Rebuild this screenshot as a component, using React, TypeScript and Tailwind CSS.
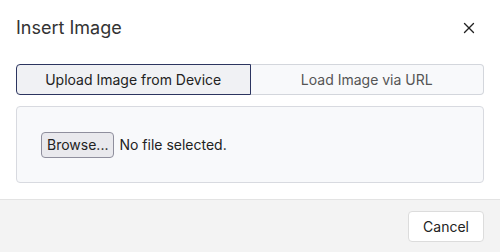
import { X } from 'lucide-react';

export default function App() {
  return (
    <div className="flex h-[252px] w-[500px] flex-col overflow-hidden bg-white font-['Inter',sans-serif] text-[#222]">
      <div className="flex items-center justify-between px-4 pb-[24px] pt-[16px]">
        <h2 className="text-[18px] leading-[24px] text-[#333]">Insert Image</h2>
        <button type="button" className="mr-[6px] text-[#222]" aria-label="Close">
          <X className="h-[18px] w-[18px]" strokeWidth={1.8} />
        </button>
      </div>

      <div className="px-4">
        <div className="flex h-[31px]">
          <button
            type="button"
            className="flex-1 rounded-l-[4px] border border-[#2c3560] bg-[#f0f1f4] text-[14px] text-[#222]"
          >
            Upload Image from Device
          </button>
          <button
            type="button"
            className="flex-1 rounded-r-[4px] border border-l-0 border-[#d3d6dc] bg-[#f8f9fb] text-[14px] text-[#555]"
          >
            Load Image via URL
          </button>
        </div>

        <div className="mt-[11px] flex h-[77px] items-center rounded-[4px] border border-[#d8dae0] bg-[#f8f9fb] px-6">
          <button
            type="button"
            className="h-[26px] rounded-[4px] border border-[#8f8f9d] bg-[#e9e9ed] px-[5px] text-[14px] text-[#222]"
          >
            Browse...
          </button>
          <span className="ml-[5px] text-[14px] text-[#222]">No file selected.</span>
        </div>
      </div>

      <div className="mt-auto flex h-[53px] items-center justify-end border-t border-[#e3e3e3] bg-[#f3f3f3] px-4">
        <button
          type="button"
          className="h-[31px] rounded-[4px] border border-[#dcdcdc] bg-white px-[14px] text-[14px] text-[#222]"
        >
          Cancel
        </button>
      </div>
    </div>
  );
}
